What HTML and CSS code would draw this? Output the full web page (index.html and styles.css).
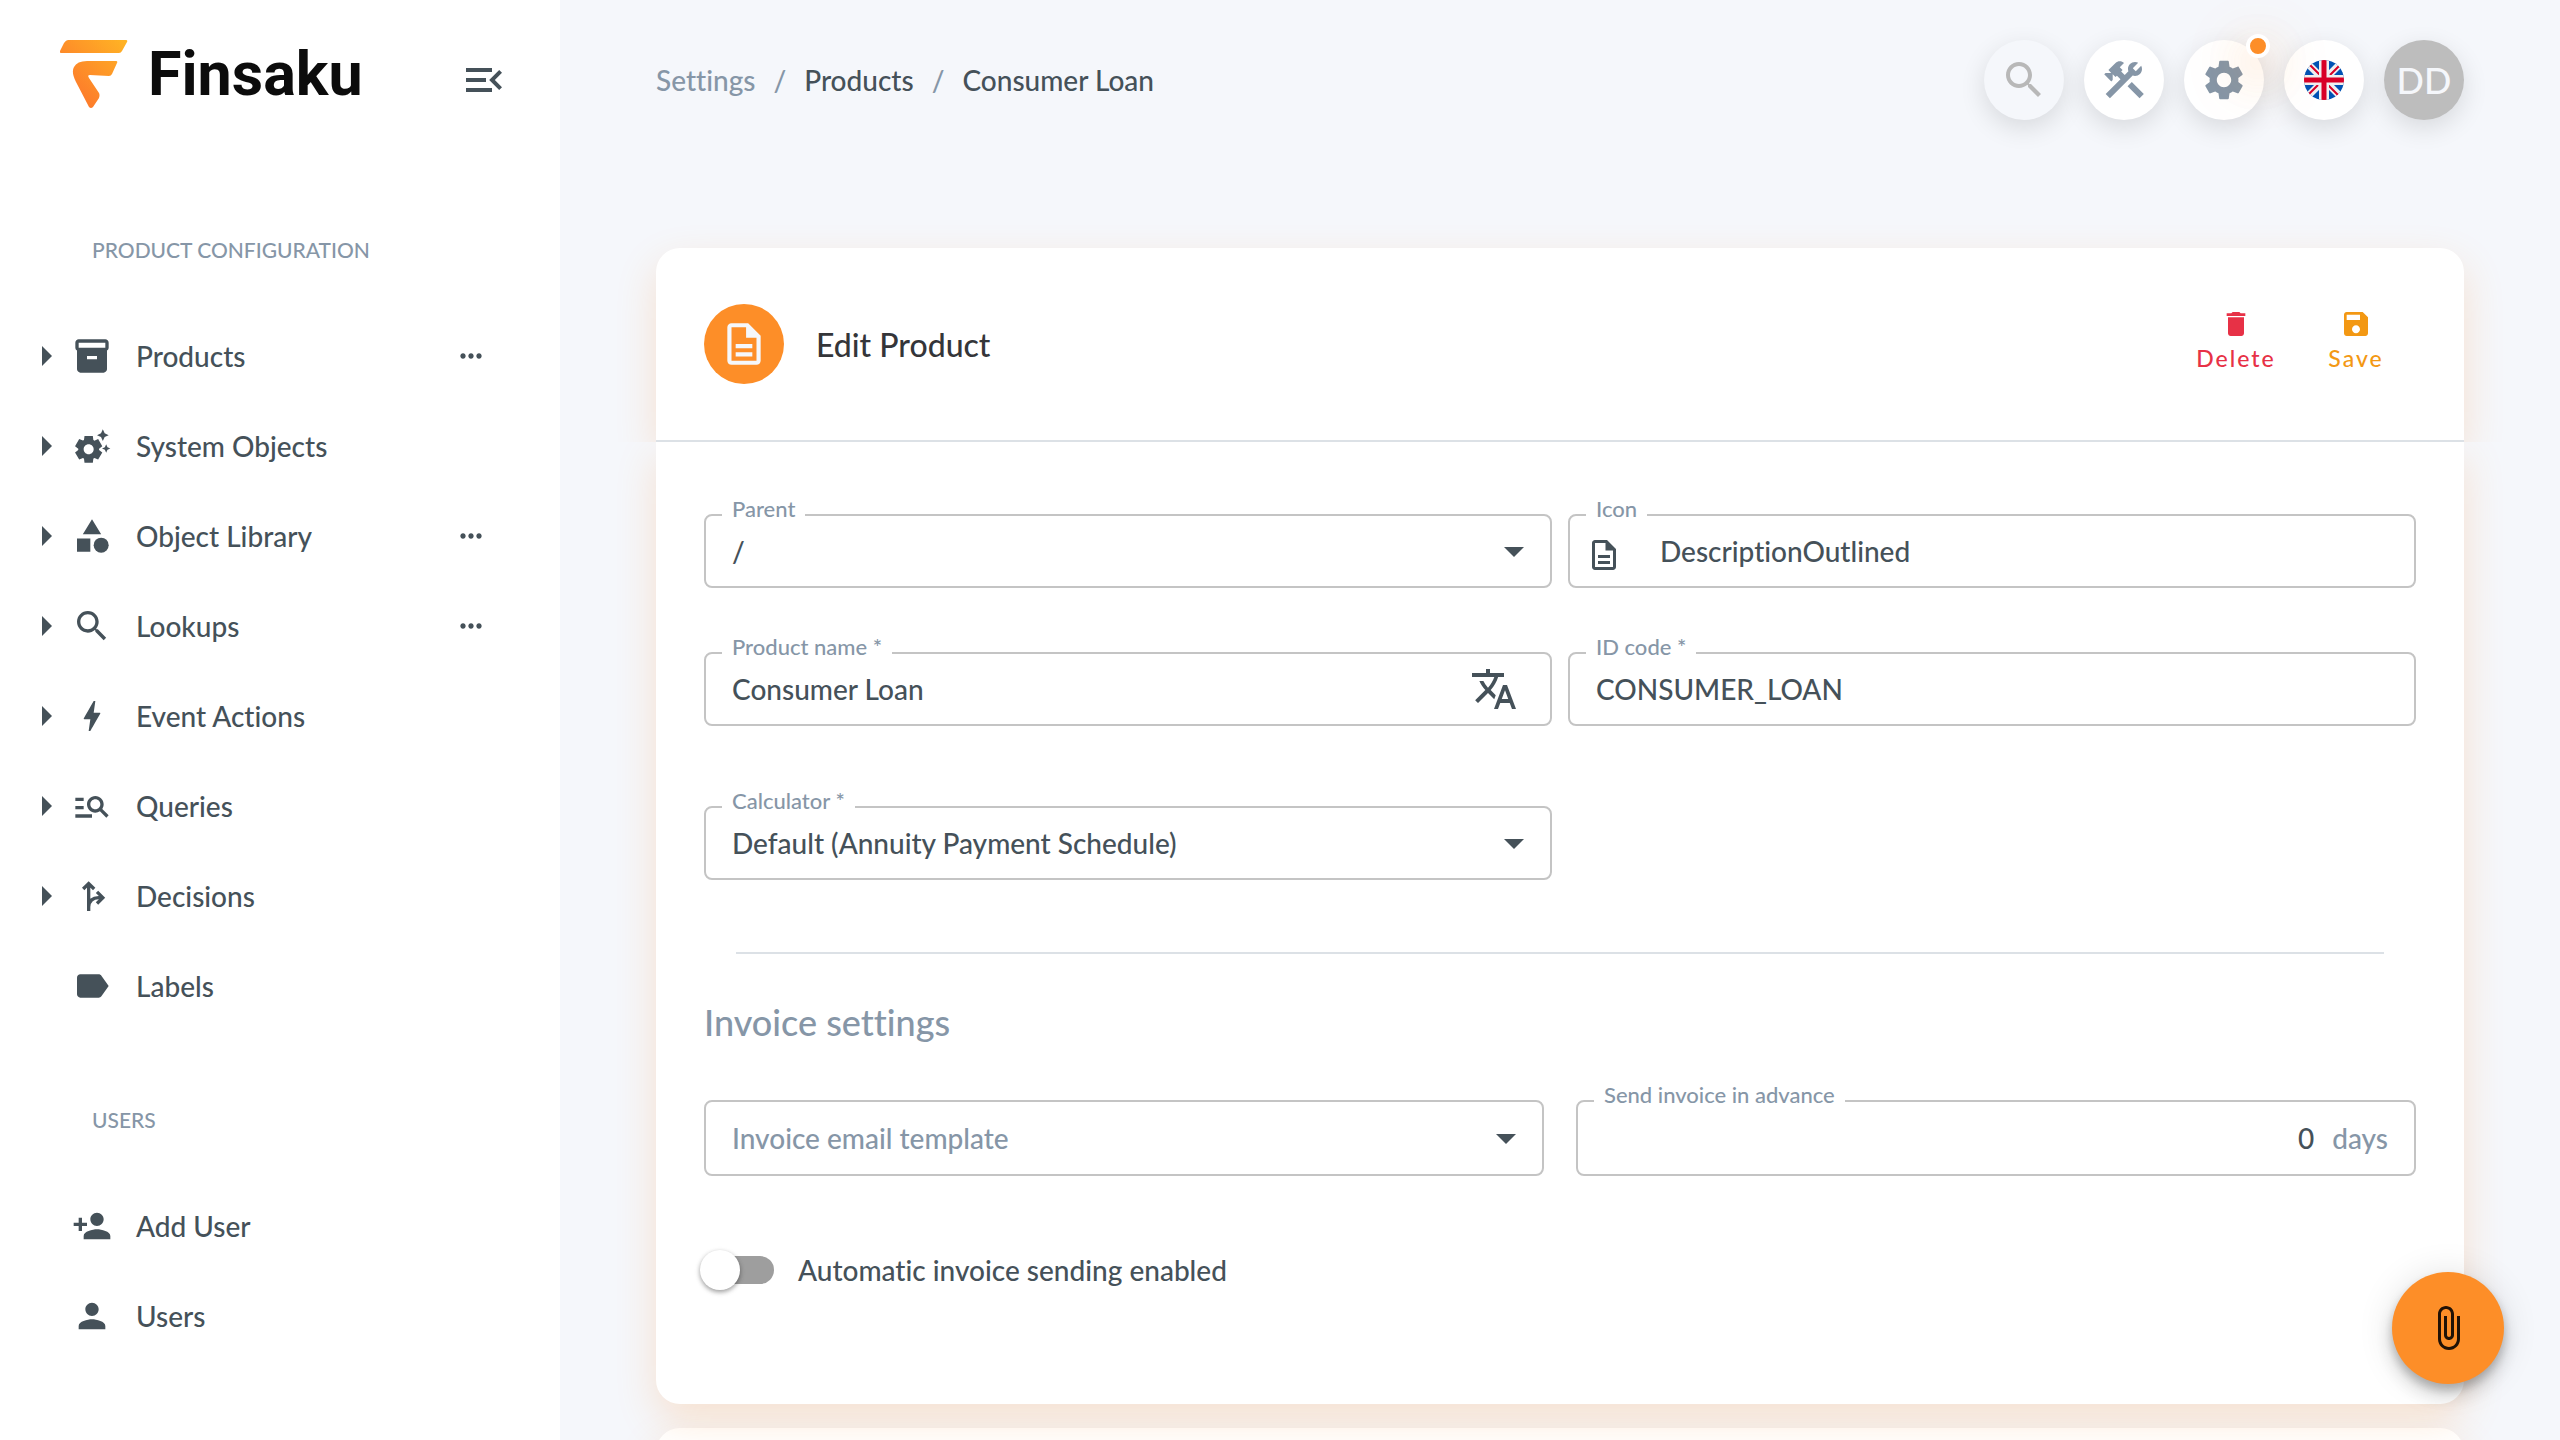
FILE: index.html
```html
<!DOCTYPE html>
<html lang="en">
<head>
    <meta charset="UTF-8">
    <meta name="viewport" content="width=device-width, initial-scale=1.0">
    <title>Finsaku - Consumer Loan</title>
    <link rel="stylesheet" href="styles.css">
</head>
<body>
    <aside class="sidebar">
        <div class="brand">
            <svg class="brand-mark" viewBox="0 0 68 68">
                <defs>
                    <linearGradient id="flame" x1="0" y1="1" x2="1" y2="0">
                        <stop offset="0.2" stop-color="#fd7a2b"/>
                        <stop offset="1" stop-color="#ffb524"/>
                    </linearGradient>
                </defs>
                <path fill="url(#flame)" d="M8 0h58q2 0 1 2l-5 9q-1 2-3 2H2q-3 0-2-2l4-8q2-3 4-3zM27 21h29q2 0 1 2l-5 11q-1 2-3 2l-19-1q-3 0-1 3l10 15q1 2 0 5l-6 9q-2 2-4 0L16 42Q11 32 14 27q3-6 13-6z"/>
            </svg>
            <span class="brand-name">Finsaku</span>
            <button class="collapse" aria-label="Collapse menu">
                <svg class="icon-lg" viewBox="0 0 24 24"><path d="M3 18h13v-2H3v2zM3 6v2h13V6H3zm0 7h10v-2H3v2zM21 15.590 17.420 12 21 8.410 19.590 7l-5 5 5 5L21 15.590z"/></svg>
            </button>
        </div>

        <nav>
            <h2 class="nav-title">PRODUCT CONFIGURATION</h2>
            <ul class="nav-list">
                <li>
                    <button class="expand" aria-label="Expand"><svg class="icon-lg" viewBox="0 0 24 24"><path d="m10 17 5-5-5-5z"/></svg></button>
                    <a href="#"><svg viewBox="0 0 24 24"><path d="M20 2H4c-1 0-2 .9-2 2v3.010c0 .72.43 1.340 1 1.690V20c0 1.100 1.100 2 2 2h14c.9 0 2-.9 2-2V8.700c.57-.35 1-.97 1-1.690V4c0-1.100-1-2-2-2zm-5 12H9v-2h6v2zm5-7H4V4h16v3z"/></svg>Products</a>
                    <button class="more" aria-label="More"><svg viewBox="0 0 24 24"><path d="M6 10c-1.100 0-2 .9-2 2s.9 2 2 2 2-.9 2-2-.9-2-2-2zm12 0c-1.100 0-2 .9-2 2s.9 2 2 2 2-.9 2-2-.9-2-2-2zm-6 0c-1.100 0-2 .9-2 2s.9 2 2 2 2-.9 2-2-.9-2-2-2z"/></svg></button>
                </li>
                <li>
                    <button class="expand" aria-label="Expand"><svg class="icon-lg" viewBox="0 0 24 24"><path d="m10 17 5-5-5-5z"/></svg></button>
                    <a href="#"><svg viewBox="0 0 24 24"><path d="M17.410 6.590 15 5.500l2.410-1.090L18.500 2l1.090 2.410L22 5.500l-2.410 1.090L18.500 9l-1.090-2.410zm3.870 6.130L20.500 11l-.78 1.720-1.720.78 1.720.78.78 1.720.78-1.720L23 13.500l-1.720-.78zm-5.040 1.650 1.940 1.470-2.500 4.330-2.240-.94c-.2.13-.42.26-.64.37l-.3 2.400h-5l-.3-2.410c-.22-.11-.43-.23-.64-.37l-2.240.94-2.500-4.330 1.940-1.470c-.01-.11-.01-.24-.01-.36s0-.25.01-.37l-1.940-1.470 2.500-4.330 2.240.94c.2-.13.42-.26.64-.37L7.500 6h5l.3 2.410c.22.11.43.23.64.37l2.240-.94 2.500 4.330-1.940 1.470c.01.12.01.24.01.37s0 .24-.01.36zM13 14c0-1.660-1.340-3-3-3s-3 1.340-3 3 1.340 3 3 3 3-1.340 3-3z"/></svg>System Objects</a>
                </li>
                <li>
                    <button class="expand" aria-label="Expand"><svg class="icon-lg" viewBox="0 0 24 24"><path d="m10 17 5-5-5-5z"/></svg></button>
                    <a href="#"><svg viewBox="0 0 24 24"><path d="m12 2-5.500 9h11zM3 13.500h8v8H3z"/><circle cx="17.500" cy="17.500" r="4.500"/></svg>Object Library</a>
                    <button class="more" aria-label="More"><svg viewBox="0 0 24 24"><path d="M6 10c-1.100 0-2 .9-2 2s.9 2 2 2 2-.9 2-2-.9-2-2-2zm12 0c-1.100 0-2 .9-2 2s.9 2 2 2 2-.9 2-2-.9-2-2-2zm-6 0c-1.100 0-2 .9-2 2s.9 2 2 2 2-.9 2-2-.9-2-2-2z"/></svg></button>
                </li>
                <li>
                    <button class="expand" aria-label="Expand"><svg class="icon-lg" viewBox="0 0 24 24"><path d="m10 17 5-5-5-5z"/></svg></button>
                    <a href="#"><svg viewBox="0 0 24 24"><path d="M15.500 14h-.79l-.28-.27C15.410 12.590 16 11.110 16 9.500 16 5.910 13.090 3 9.500 3S3 5.910 3 9.500 5.910 16 9.500 16c1.610 0 3.090-.59 4.230-1.570l.27.28v.79l5 4.990L20.490 19l-4.990-5zm-6 0C7.010 14 5 11.990 5 9.500S7.010 5 9.500 5 14 7.010 14 9.500 11.990 14 9.500 14z"/></svg>Lookups</a>
                    <button class="more" aria-label="More"><svg viewBox="0 0 24 24"><path d="M6 10c-1.100 0-2 .9-2 2s.9 2 2 2 2-.9 2-2-.9-2-2-2zm12 0c-1.100 0-2 .9-2 2s.9 2 2 2 2-.9 2-2-.9-2-2-2zm-6 0c-1.100 0-2 .9-2 2s.9 2 2 2 2-.9 2-2-.9-2-2-2z"/></svg></button>
                </li>
                <li>
                    <button class="expand" aria-label="Expand"><svg class="icon-lg" viewBox="0 0 24 24"><path d="m10 17 5-5-5-5z"/></svg></button>
                    <a href="#"><svg viewBox="0 0 24 24"><path d="M11 21h-1l1-7H7.500c-.88 0-.33-.75-.31-.78C8.480 10.940 10.420 7.540 13.010 3h1l-1 7h3.510c.4 0 .62.19.4.66C12.970 17.550 11 21 11 21z"/></svg>Event Actions</a>
                </li>
                <li>
                    <button class="expand" aria-label="Expand"><svg class="icon-lg" viewBox="0 0 24 24"><path d="m10 17 5-5-5-5z"/></svg></button>
                    <a href="#"><svg viewBox="0 0 24 24"><path d="M7 9H2V7h5v2zm0 3H2v2h5v-2zm13.590 7-3.830-3.830c-.8.52-1.740.83-2.760.83-2.760 0-5-2.240-5-5s2.240-5 5-5 5 2.240 5 5c0 1.020-.31 1.960-.83 2.750L22 17.590 20.590 19zM17 11c0-1.650-1.350-3-3-3s-3 1.350-3 3 1.350 3 3 3 3-1.350 3-3zM2 19h10v-2H2v2z"/></svg>Queries</a>
                </li>
                <li>
                    <button class="expand" aria-label="Expand"><svg class="icon-lg" viewBox="0 0 24 24"><path d="m10 17 5-5-5-5z"/></svg></button>
                    <a href="#"><svg viewBox="0 0 24 24"><path class="stroked" d="M10 21V4.500M6.700 7.800 10 4.500l3.300 3.300M10 18.500q.5-5.500 6-5.500h2.500M15 9.500l3.500 3.500-3.500 3.500"/></svg>Decisions</a>
                </li>
                <li>
                    <a href="#"><svg viewBox="0 0 24 24"><path d="M17.630 5.840C17.270 5.330 16.670 5 16 5L5 5.010C3.900 5.010 3 5.900 3 7v10c0 1.100.9 1.990 2 1.990L16 19c.67 0 1.270-.33 1.630-.84L22 12l-4.370-6.160z"/></svg>Labels</a>
                </li>
            </ul>

            <h2 class="nav-title users">USERS</h2>
            <ul class="nav-list">
                <li>
                    <a href="#"><svg viewBox="0 0 24 24"><path d="M15 12c2.210 0 4-1.790 4-4s-1.790-4-4-4-4 1.790-4 4 1.790 4 4 4zm-9-2V7H4v3H1v2h3v3h2v-3h3v-2H6zm9 4c-2.670 0-8 1.340-8 4v2h16v-2c0-2.660-5.330-4-8-4z"/></svg>Add User</a>
                </li>
                <li>
                    <a href="#"><svg viewBox="0 0 24 24"><path d="M12 12c2.210 0 4-1.790 4-4s-1.790-4-4-4-4 1.790-4 4 1.790 4 4 4zm0 2c-2.670 0-8 1.340-8 4v2h16v-2c0-2.660-5.330-4-8-4z"/></svg>Users</a>
                </li>
            </ul>
        </nav>
    </aside>

    <main class="content">
        <header class="topbar">
            <nav class="breadcrumbs">
                <a class="muted" href="#">Settings</a>
                <span>/</span>
                <a href="#">Products</a>
                <span>/</span>
                <a href="#">Consumer Loan</a>
            </nav>
            <div class="tools">
                <button class="round disabled" aria-label="Search" disabled>
                    <svg class="icon-lg" viewBox="0 0 24 24"><path d="M15.500 14h-.79l-.28-.27C15.410 12.590 16 11.110 16 9.500 16 5.910 13.090 3 9.500 3S3 5.910 3 9.500 5.910 16 9.500 16c1.610 0 3.090-.59 4.230-1.570l.27.28v.79l5 4.990L20.490 19l-4.990-5zm-6 0C7.010 14 5 11.990 5 9.500S7.010 5 9.500 5 14 7.010 14 9.500 11.990 14 9.500 14z"/></svg>
                </button>
                <button class="round" aria-label="Tools">
                    <svg class="icon-lg" viewBox="0 0 24 24"><path d="m13.780 15.170 2.120-2.120 6 6-2.120 2.120z"/><path d="M17.500 10c1.930 0 3.500-1.570 3.500-3.500 0-.58-.16-1.120-.41-1.600l-2.700 2.700-1.490-1.490 2.700-2.700c-.48-.25-1.020-.41-1.600-.41C15.570 3 14 4.570 14 6.500c0 .41.08.8.21 1.160l-1.850 1.850-1.780-1.780.71-.71-1.410-1.410L12 3.490c-1.170-1.170-3.070-1.170-4.240 0L4.220 7.030l1.410 1.410H2.810l-.71.71 3.540 3.540.71-.71V9.150l1.410 1.410.71-.71 1.780 1.780-7.410 7.410 2.120 2.120L16.340 9.790c.36.13.75.21 1.160.21z"/></svg>
                </button>
                <button class="round" aria-label="Settings">
                    <svg class="icon-lg" viewBox="0 0 24 24"><path d="M19.140 12.940c.04-.3.06-.61.06-.94 0-.32-.02-.64-.07-.94l2.030-1.580c.18-.14.23-.41.12-.61l-1.920-3.320c-.12-.22-.37-.29-.59-.22l-2.390.96c-.5-.38-1.030-.7-1.620-.94l-.36-2.540c-.04-.24-.24-.41-.48-.41h-3.840c-.24 0-.43.17-.47.41l-.36 2.540c-.59.24-1.130.57-1.620.94l-2.390-.96c-.22-.08-.47 0-.59.22L2.740 8.870c-.12.21-.08.47.12.61l2.030 1.580c-.05.3-.09.63-.09.94s.02.64.07.94l-2.030 1.580c-.18.14-.23.41-.12.61l1.920 3.320c.12.22.37.29.59.22l2.390-.96c.5.38 1.030.7 1.620.94l.36 2.540c.05.24.24.41.48.41h3.840c.24 0 .44-.17.47-.41l.36-2.540c.59-.24 1.130-.56 1.620-.94l2.390.96c.22.08.47 0 .59-.22l1.920-3.320c.12-.22.07-.47-.12-.61l-2.010-1.580zM12 15.600c-1.980 0-3.600-1.620-3.600-3.600s1.620-3.600 3.600-3.600 3.600 1.620 3.600 3.600-1.620 3.600-3.600 3.600z"/></svg>
                    <span class="badge"></span>
                </button>
                <button class="round" aria-label="Language: English">
                    <svg class="flag" viewBox="0 0 40 40">
                        <path fill="#0052b4" d="M0 0h40v40H0z"/>
                        <path stroke="#f0f0f0" stroke-width="7" d="M0 0l40 40M40 0 0 40"/>
                        <path stroke="#d80027" stroke-width="2" d="M1 0l15 15M41 0 26 15M-1 40l15-15M39 40 24 25"/>
                        <path stroke="#f0f0f0" stroke-width="10" d="M20 0v40M0 20h40"/>
                        <path stroke="#d80027" stroke-width="5" d="M20 0v40M0 20h40"/>
                    </svg>
                </button>
                <button class="round avatar">DD</button>
            </div>
        </header>

        <section class="card">
            <div class="card-head">
                <span class="card-icon">
                    <svg viewBox="0 0 24 24"><path d="M8 16h8v2H8zm0-4h8v2H8zm6-10H6c-1.100 0-2 .9-2 2v16c0 1.100.89 2 1.990 2H18c1.100 0 2-.9 2-2V8l-6-6zm4 18H6V4h7v5h5v11z"/></svg>
                </span>
                <h1>Edit Product</h1>
                <button class="action delete">
                    <svg viewBox="0 0 24 24"><path d="M6 19c0 1.100.9 2 2 2h8c1.100 0 2-.9 2-2V7H6v12zM19 4h-3.500l-1-1h-5l-1 1H5v2h14V4z"/></svg>
                    Delete
                </button>
                <button class="action save">
                    <svg viewBox="0 0 24 24"><path d="M17 3H5c-1.110 0-2 .9-2 2v14c0 1.100.89 2 2 2h14c1.100 0 2-.9 2-2V7l-4-4zm-5 16c-1.660 0-3-1.340-3-3s1.340-3 3-3 3 1.340 3 3-1.340 3-3 3zm3-10H5V5h10v4z"/></svg>
                    Save
                </button>
            </div>

            <form class="card-body">
                <div class="row">
                    <div class="field">
                        <label for="parent">Parent</label>
                        <select id="parent"><option>/</option></select>
                        <svg class="icon-lg" viewBox="0 0 24 24"><path d="m7 10 5 5 5-5z"/></svg>
                    </div>
                    <div class="field with-icon">
                        <label for="icon">Icon</label>
                        <svg class="icon-doc" viewBox="0 0 24 24"><path d="M8 16h8v2H8zm0-4h8v2H8zm6-10H6c-1.100 0-2 .9-2 2v16c0 1.100.89 2 1.990 2H18c1.100 0 2-.9 2-2V8l-6-6zm4 18H6V4h7v5h5v11z"/></svg>
                        <input id="icon" type="text" value="DescriptionOutlined">
                    </div>
                    <div class="field">
                        <label for="name">Product name *</label>
                        <input id="name" type="text" value="Consumer Loan">
                        <button class="translate" type="button" aria-label="Translate">
                            <svg class="icon-lg" viewBox="0 0 24 24"><path d="m12.870 15.070-2.540-2.510.03-.03c1.740-1.940 2.980-4.170 3.710-6.530H17V4h-7V2H8v2H1v1.990h11.170C11.500 7.920 10.440 9.750 9 11.350 8.070 10.320 7.300 9.190 6.690 8h-2c.73 1.630 1.730 3.170 2.980 4.560l-5.090 5.020L4 19l5-5 3.110 3.110.76-2.040zM18.500 10h-2L12 22h2l1.120-3h4.750L21 22h2l-4.500-12zm-2.620 7 1.620-4.330L19.120 17h-3.240z"/></svg>
                        </button>
                    </div>
                    <div class="field">
                        <label for="code">ID code *</label>
                        <input id="code" type="text" value="CONSUMER_LOAN">
                    </div>
                </div>
                <div class="row calculator">
                    <div class="field">
                        <label for="calculator">Calculator *</label>
                        <select id="calculator"><option>Default (Annuity Payment Schedule)</option></select>
                        <svg class="icon-lg" viewBox="0 0 24 24"><path d="m7 10 5 5 5-5z"/></svg>
                    </div>
                </div>

                <hr>

                <h2 class="form-title">Invoice settings</h2>
                <div class="row invoice">
                    <div class="field">
                        <select class="empty" aria-label="Invoice email template"><option>Invoice email template</option></select>
                        <svg class="icon-lg" viewBox="0 0 24 24"><path d="m7 10 5 5 5-5z"/></svg>
                    </div>
                    <div class="field">
                        <label for="advance">Send invoice in advance</label>
                        <input id="advance" class="number" type="text" inputmode="numeric" value="0">
                        <span class="unit">days</span>
                    </div>
                </div>
                <div class="switch">
                    <input id="auto" type="checkbox" role="switch">
                    <label for="auto">Automatic invoice sending enabled</label>
                </div>
            </form>
        </section>

        <section class="card next"></section>
    </main>

    <button class="fab" aria-label="Attachments">
        <svg class="icon-lg" viewBox="0 0 24 24"><path d="M16.500 6v11.500c0 2.210-1.790 4-4 4s-4-1.790-4-4V5c0-1.380 1.120-2.500 2.500-2.500s2.500 1.120 2.500 2.500v10.500c0 .55-.45 1-1 1s-1-.45-1-1V6H10v9.500c0 1.380 1.120 2.500 2.500 2.500s2.500-1.120 2.500-2.500V5c0-2.210-1.790-4-4-4S7 2.790 7 5v12.500c0 3.040 2.460 5.500 5.500 5.500s5.500-2.460 5.500-5.500V6h-1.500z"/></svg>
    </button>
</body>
</html>
```
FILE: styles.css
```css
* {
    box-sizing: border-box;
}
body {
    display: flex;
    height: 100vh;
    margin: 0;
    overflow: hidden;
    background-color: #f5f7fb;
    color: #455159;
    font-family: Lato, "Open Sans", sans-serif;
    font-size: 28px;
    font-weight: 500;
    font-variant-ligatures: none;
}
a {
    color: inherit;
    text-decoration: none;
}
button {
    padding: 0;
    border: 0;
    background: none;
    color: inherit;
    font: inherit;
    cursor: pointer;
}
svg {
    display: block;
    flex: none;
    fill: currentColor;
}
h1, h2, ul {
    margin: 0;
    padding: 0;
    font-weight: 500;
}
.icon-lg {
    width: 48px;
    height: 48px;
}
.stroked {
    fill: none;
    stroke: currentColor;
    stroke-width: 2;
}

/* sidebar */
.sidebar {
    flex: none;
    width: 560px;
    background-color: white;
}
.brand {
    display: flex;
    align-items: center;
    height: 148px;
    padding: 0 52px 0 60px;
}
.brand-mark {
    width: 68px;
    height: 68px;
}
.brand-name {
    margin-left: 20px;
    color: #0c0c0c;
    font-family: Roboto, sans-serif;
    font-size: 61px;
    font-weight: 700;
}
.collapse {
    margin: 12px 0 0 auto;
}
.nav-title {
    margin: 86px 0 45px 92px;
    color: #8696a7;
    font-size: 21px;
    line-height: 32px;
}
.nav-title.users {
    margin-top: 73px;
}
.nav-list {
    list-style: none;
}
.nav-list li {
    display: grid;
    grid-template-columns: 50px 1fr 32px;
    align-items: center;
    height: 90px;
    padding: 0 73px 0 22px;
}
.nav-list a {
    display: flex;
    grid-column: 2;
    align-items: center;
    gap: 24px;
}
.nav-list a svg {
    width: 40px;
    height: 40px;
}
.more svg {
    width: 32px;
    height: 32px;
}

/* top bar */
.content {
    flex: 1;
    min-width: 0;
    padding: 0 96px;
}
.topbar {
    display: flex;
    align-items: center;
    justify-content: space-between;
    height: 160px;
}
.breadcrumbs {
    display: flex;
    gap: 18px;
}
.breadcrumbs span, .breadcrumbs .muted {
    color: #8696a7;
}
.tools {
    display: flex;
    gap: 20px;
}
.round {
    display: flex;
    position: relative;
    align-items: center;
    justify-content: center;
    width: 80px;
    height: 80px;
    border-radius: 50%;
    background-color: white;
    box-shadow: 0 8px 26px rgba(0, 0, 0, 0.12);
    color: #8696a7;
}
.disabled {
    background-color: #f5f7fb;
    color: #b8b8b8;
}
.badge {
    position: absolute;
    z-index: 1;
    top: -6px;
    right: -6px;
    width: 24px;
    height: 24px;
    border: 4px solid white;
    border-radius: 50%;
    background-color: #fd8e28;
    box-shadow: 0 16px 40px rgba(253, 142, 40, 0.25), 0 16px 60px 10px rgba(253, 142, 40, 0.15);
}
.flag {
    width: 40px;
    height: 40px;
    border-radius: 50%;
}
.avatar {
    background-color: #bdbdbd;
    color: #f5f7fb;
    font-size: 36px;
}

/* card */
.card {
    margin-top: 88px;
}
.card-head, .card-body {
    background-color: white;
    box-shadow: 0 16px 40px rgba(253, 142, 40, 0.2);
}
.card-head {
    display: flex;
    align-items: center;
    height: 194px;
    padding: 0 48px;
    border-bottom: 2px solid #dce1e6;
    border-radius: 24px 24px 0 0;
    clip-path: inset(-60px -60px 0 -60px);
}
.card-icon {
    display: flex;
    align-items: center;
    justify-content: center;
    width: 80px;
    height: 80px;
    border-radius: 50%;
    background-color: #fd8e28;
    color: #f5f7fb;
}
.card-icon svg {
    width: 50px;
    height: 50px;
}
.card-head h1 {
    margin: 0 auto 0 32px;
    color: #343539;
    font-size: 32px;
}
.action {
    display: flex;
    flex-direction: column;
    align-items: center;
    width: 120px;
    padding-bottom: 4px;
    font-size: 23px;
    line-height: 36px;
    letter-spacing: 2px;
}
.action svg {
    width: 32px;
    height: 32px;
}
.delete {
    color: #e73146;
}
.save {
    color: #f39813;
}
.card-body {
    padding: 72px 48px 114px;
    border-radius: 0 0 24px 24px;
    clip-path: inset(0 -60px -60px -60px);
}
.next {
    height: 200px;
    margin-top: 24px;
    border-radius: 24px;
    background-color: white;
    box-shadow: 0 16px 40px rgba(253, 142, 40, 0.2);
}

/* form */
.row {
    display: grid;
    grid-template-columns: 1fr 1fr;
    gap: 64px 16px;
}
.row.calculator {
    margin-top: 80px;
}
.row.invoice {
    column-gap: 32px;
}
.field {
    display: flex;
    position: relative;
    align-items: center;
    height: 74px;
    padding: 0 12px 0 0;
    border: 2px solid #c4c4c4;
    border-radius: 8px;
}
.invoice .field {
    height: 76px;
}
.field label {
    position: absolute;
    top: -20px;
    left: 16px;
    padding: 0 10px;
    background-color: white;
    color: #8696a7;
    font-size: 22px;
    line-height: 26px;
}
.field input, .field select {
    flex: 1;
    min-width: 0;
    height: 100%;
    padding: 0 0 0 26px;
    border: 0;
    outline: 0;
    background: none;
    color: inherit;
    font: inherit;
    appearance: none;
}
.field select + .icon-lg {
    margin-left: -48px;
    pointer-events: none;
}
.with-icon .icon-doc {
    width: 36px;
    height: 36px;
    margin: 8px 0 0 16px;
}
.with-icon input {
    padding-left: 38px;
}
.translate {
    margin-right: 20px;
}
.field .empty, .unit {
    color: #8696a7;
}
.field .number {
    text-align: right;
}
.unit {
    margin: 0 14px 0 18px;
}
hr {
    height: 2px;
    margin: 72px 32px 44px;
    border: 0;
    background-color: #dce1e6;
}
.form-title {
    margin-bottom: 54px;
    color: #8696a7;
    font-size: 36px;
    line-height: 48px;
}
.switch {
    display: flex;
    align-items: center;
    gap: 24px;
    height: 40px;
    margin-top: 74px;
}
.switch input {
    position: relative;
    width: 68px;
    height: 28px;
    margin: 0 0 0 2px;
    border-radius: 14px;
    background-color: #9e9e9e;
    appearance: none;
}
.switch input::before {
    content: "";
    position: absolute;
    top: -6px;
    left: -6px;
    width: 40px;
    height: 40px;
    border-radius: 50%;
    background-color: white;
    box-shadow: 0 2px 4px rgba(0, 0, 0, 0.3), 0 2px 6px rgba(0, 0, 0, 0.12);
}
.switch input:checked::before {
    left: 34px;
}

.fab {
    display: flex;
    position: fixed;
    right: 56px;
    bottom: 56px;
    align-items: center;
    justify-content: center;
    width: 112px;
    height: 112px;
    border-radius: 50%;
    background-color: #fd8e28;
    box-shadow: 0 6px 10px rgba(0, 0, 0, 0.2), 0 12px 20px rgba(0, 0, 0, 0.14), 0 2px 36px rgba(0, 0, 0, 0.12);
    color: #211206;
}
```
